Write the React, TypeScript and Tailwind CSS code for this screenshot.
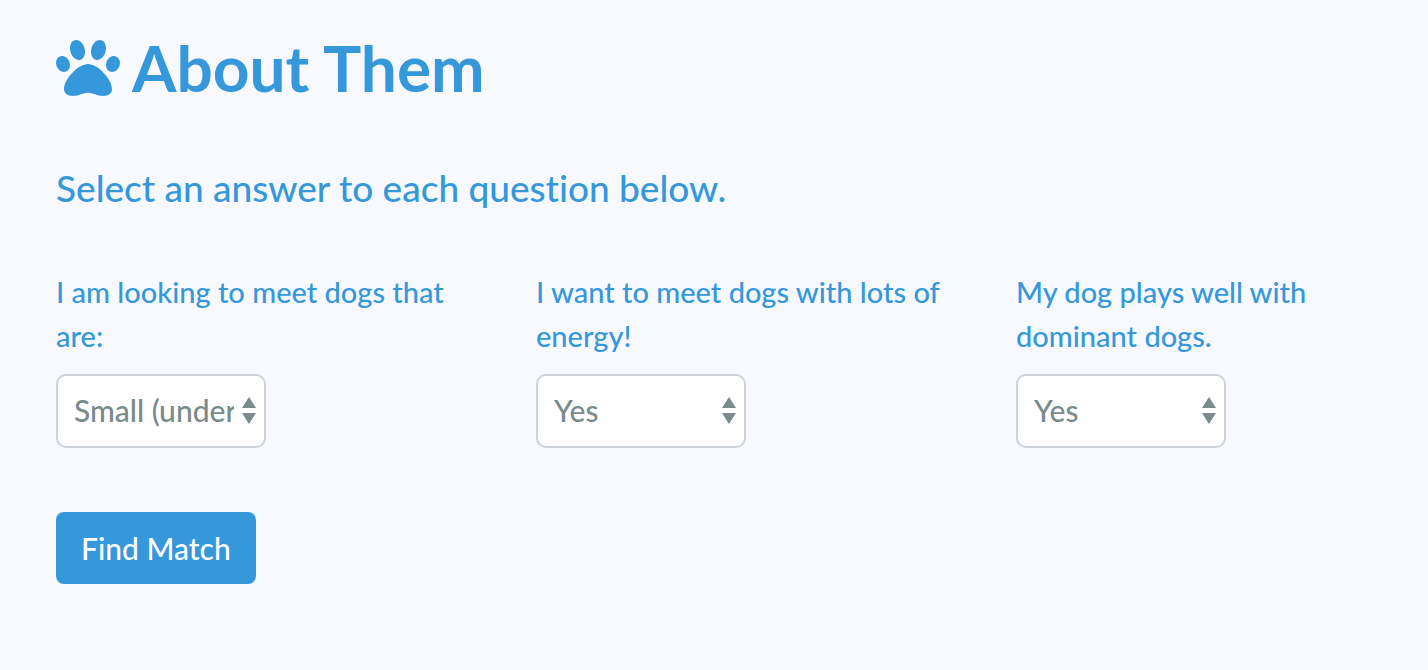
import { FaPaw } from "react-icons/fa";

type Question = { id: string; label: string; options: string[] };

const questions: Question[] = [
  {
    id: "size",
    label: "I am looking to meet dogs that are:",
    options: ["Small (under 20 lbs)", "Medium", "Large"],
  },
  { id: "energy", label: "I want to meet dogs with lots of energy!", options: ["Yes", "No"] },
  { id: "dominant", label: "My dog plays well with dominant dogs.", options: ["Yes", "No"] },
];

function SelectField({ id, options }: { id: string; options: string[] }) {
  return (
    <div className="relative w-[210px]">
      <select
        id={id}
        className="block h-[74px] w-full appearance-none overflow-hidden rounded-[10px] border-2 border-[#ced4da] bg-white pr-[30px] pb-[2px] pl-4 text-[30px] leading-[44px] text-[#7b8a8b]"
      >
        {options.map((option) => (
          <option key={option}>{option}</option>
        ))}
      </select>
      <svg
        viewBox="0 0 14 27"
        className="pointer-events-none absolute top-[23px] right-[10px] h-[27px] w-[14px] fill-[#7b8a8b]"
        aria-hidden="true"
      >
        <path d="M7 0 14 11H0zM7 27 0 16h14z" />
      </svg>
    </div>
  );
}

export default function App() {
  return (
    <main className="min-h-screen bg-[#f8f9ff] pt-[30px] pb-14 pl-14 font-['Lato_Medium',Lato,sans-serif] text-[#3498db] [font-variant-ligatures:no-common-ligatures]">
      <h1 className="flex items-center gap-3 font-['Lato',sans-serif] text-[64px] leading-[76px] font-bold">
        <FaPaw className="size-16 shrink-0" aria-hidden="true" />
        About Them
      </h1>
      <h2 className="mt-[60px] text-[37px] leading-[44px] font-medium">
        Select an answer to each question below.
      </h2>
      <form onSubmit={(event) => event.preventDefault()}>
        <div className="mt-[60px] grid grid-cols-[480fr_480fr_412fr]">
          {questions.map((question) => (
            <div key={question.id} className="pr-[60px]">
              <label
                htmlFor={question.id}
                className="mb-4 block text-[29px] leading-[44px] font-medium"
              >
                {question.label}
              </label>
              <SelectField id={question.id} options={question.options} />
            </div>
          ))}
        </div>
        <button
          type="submit"
          className="mt-16 h-[72px] rounded-lg bg-[#3498db] px-[25px] text-[30px] leading-[44px] text-white"
        >
          Find Match
        </button>
      </form>
    </main>
  );
}
